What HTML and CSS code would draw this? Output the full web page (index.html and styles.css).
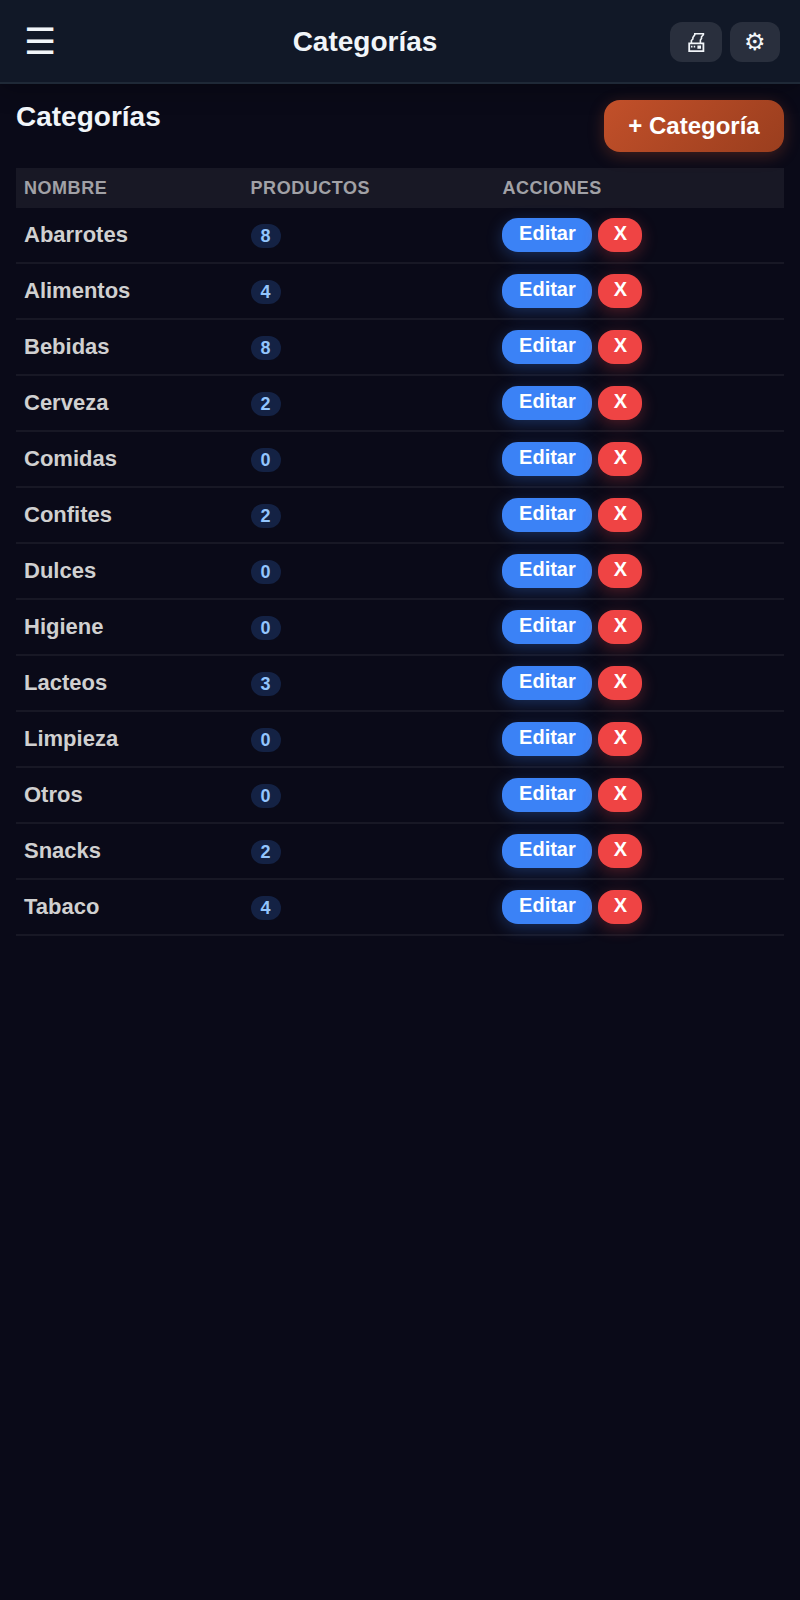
FILE: index.html
```
<!DOCTYPE html>
<html lang="es">
  <head>
    <meta charset="UTF-8">
    <meta name="viewport" content="width=device-width, initial-scale=1">
    <title>Categorías</title>
    <link rel="stylesheet" href="styles.css">
  </head>
  <body>

<header class="topbar">
  <button type="button" class="menu" aria-label="Menú">☰</button>
  <h1>Categorías</h1>
  <div class="tools">
    <button type="button" class="tool" aria-label="Imprimir">
      <svg width="24" height="24" viewBox="0 0 24 24" fill="none" stroke="currentColor" stroke-width="1.8" aria-hidden="true">
        <path d="M5.2 13.4h14.2v7.8H5.2z"/>
        <path d="M7.4 13V10.5L8.9 9V7.5L10.8 4.7V3.7H19.4V4.8L17.5 6.8V8.5L16.4 10V13" stroke-width="1.6"/>
        <path d="M7 15.8h1.5v1.7H7zM9.7 15.8h1.5v1.7H9.7zM13.4 15.4h3.6v3.4h-3.6z" fill="currentColor" stroke="none"/>
      </svg>
    </button>
    <button type="button" class="tool" aria-label="Ajustes">⚙</button>
  </div>
</header>

<main>
  <div class="heading">
    <h2>Categorías</h2>
    <button type="button" class="add">+ Categoría</button>
  </div>

  <table>
    <thead>
      <tr><th class="col-name">Nombre</th><th class="col-count">Productos</th><th>Acciones</th></tr>
    </thead>
    <tbody>
      <tr><td>Abarrotes</td><td><span class="badge">8</span></td><td><div class="actions"><button type="button" class="edit">Editar</button><button type="button" class="remove">X</button></div></td></tr>
      <tr><td>Alimentos</td><td><span class="badge">4</span></td><td><div class="actions"><button type="button" class="edit">Editar</button><button type="button" class="remove">X</button></div></td></tr>
      <tr><td>Bebidas</td><td><span class="badge">8</span></td><td><div class="actions"><button type="button" class="edit">Editar</button><button type="button" class="remove">X</button></div></td></tr>
      <tr><td>Cerveza</td><td><span class="badge">2</span></td><td><div class="actions"><button type="button" class="edit">Editar</button><button type="button" class="remove">X</button></div></td></tr>
      <tr><td>Comidas</td><td><span class="badge">0</span></td><td><div class="actions"><button type="button" class="edit">Editar</button><button type="button" class="remove">X</button></div></td></tr>
      <tr><td>Confites</td><td><span class="badge">2</span></td><td><div class="actions"><button type="button" class="edit">Editar</button><button type="button" class="remove">X</button></div></td></tr>
      <tr><td>Dulces</td><td><span class="badge">0</span></td><td><div class="actions"><button type="button" class="edit">Editar</button><button type="button" class="remove">X</button></div></td></tr>
      <tr><td>Higiene</td><td><span class="badge">0</span></td><td><div class="actions"><button type="button" class="edit">Editar</button><button type="button" class="remove">X</button></div></td></tr>
      <tr><td>Lacteos</td><td><span class="badge">3</span></td><td><div class="actions"><button type="button" class="edit">Editar</button><button type="button" class="remove">X</button></div></td></tr>
      <tr><td>Limpieza</td><td><span class="badge">0</span></td><td><div class="actions"><button type="button" class="edit">Editar</button><button type="button" class="remove">X</button></div></td></tr>
      <tr><td>Otros</td><td><span class="badge">0</span></td><td><div class="actions"><button type="button" class="edit">Editar</button><button type="button" class="remove">X</button></div></td></tr>
      <tr><td>Snacks</td><td><span class="badge">2</span></td><td><div class="actions"><button type="button" class="edit">Editar</button><button type="button" class="remove">X</button></div></td></tr>
      <tr><td>Tabaco</td><td><span class="badge">4</span></td><td><div class="actions"><button type="button" class="edit">Editar</button><button type="button" class="remove">X</button></div></td></tr>
    </tbody>
  </table>
</main>

  </body>
</html>
```
FILE: styles.css
```
*, ::before, ::after { box-sizing: border-box; }

body {
  margin: 0;
  min-height: 100vh;
  font-family: "Liberation Sans", Arial, sans-serif;
  color: #f1f5f9;
  background: #0a0a18;
}

h1, h2 {
  margin: 0;
  font-size: 28px;
  line-height: 34px;
}

button {
  border: 0;
  font-family: inherit;
  font-weight: bold;
  color: #fff;
  cursor: pointer;
}

.topbar {
  display: flex;
  justify-content: space-between;
  align-items: center;
  height: 84px;
  padding: 2px 20px 0;
  border-bottom: 2px solid #1f2937;
  background: #111827;
  box-shadow: 0 4px 24px rgba(0, 0, 0, .3);
}
.menu {
  padding: 0 4px;
  font-size: 36px;
  font-weight: normal;
  color: #f1f5f9;
  background: none;
}
.tools {
  display: flex;
  gap: 8px;
}
.tool {
  display: flex;
  align-items: center;
  height: 40px;
  padding: 0 14px;
  border-radius: 12px;
  font-size: 24px;
  font-weight: normal;
  color: #f1f5f9;
  background: rgba(255, 255, 255, .1);
}

main { padding: 16px; }

.heading {
  display: flex;
  justify-content: space-between;
  align-items: flex-start;
  margin-bottom: 16px;
}
.add {
  min-width: 180px;
  height: 52px;
  padding: 0 24px;
  border-radius: 16px;
  font-size: 24px;
  background: linear-gradient(135deg, #c2502a, #9a3e1e);
  box-shadow: 0 4px 16px rgba(194, 80, 42, .3);
}

table {
  width: 100%;
  border-collapse: separate;
  border-spacing: 0;
}
th, td {
  padding: 0 8px;
  text-align: left;
}
th {
  height: 40px;
  font-size: 18px;
  letter-spacing: .03em;
  text-transform: uppercase;
  color: rgba(255, 255, 255, .6);
  background: rgba(255, 255, 255, .06);
}
td {
  height: 56px;
  border-bottom: 2px solid rgba(255, 255, 255, .06);
  font-size: 22px;
  font-weight: bold;
  color: #d0d0d0;
}
.col-name { width: 29.5%; }
.col-count { width: 32.8%; }

.badge {
  display: inline-block;
  padding: 2px 10px;
  border-radius: 12px;
  font-size: 18px;
  line-height: 20px;
  color: #93c5fd;
  background: rgba(59, 130, 246, .2);
}

.actions {
  display: flex;
  gap: 6px;
}
.edit, .remove {
  padding: 4px 15px 7px;
  border-radius: 16px;
  font-size: 20px;
  line-height: 23px;
}
.edit {
  min-width: 90px;
  background: #3b82f6;
  box-shadow: 0 4px 16px rgba(59, 130, 246, .3);
}
.remove {
  min-width: 44px;
  background: #ef4444;
  box-shadow: 0 4px 16px rgba(239, 68, 68, .3);
}
```
